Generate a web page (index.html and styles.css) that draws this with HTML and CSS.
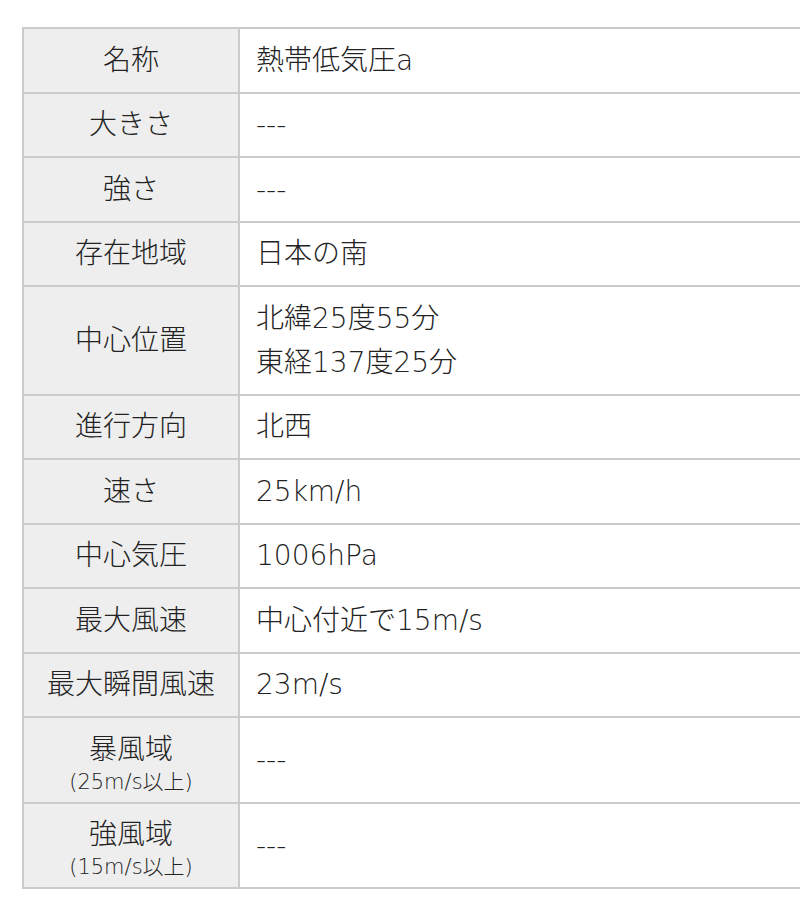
FILE: index.html
```html
<!DOCTYPE html>
<html lang="ja">
<head>
<meta charset="utf-8">
<link rel="stylesheet" href="styles.css">
</head>
<body>
<table class="info">
  <colgroup><col class="label-col"><col class="value-col"></colgroup>
  <tr><th>名称</th><td>熱帯低気圧a</td></tr>
  <tr><th>大きさ</th><td>---</td></tr>
  <tr><th>強さ</th><td>---</td></tr>
  <tr><th>存在地域</th><td>日本の南</td></tr>
  <tr><th>中心位置</th><td>北緯25度55分<br>東経137度25分</td></tr>
  <tr><th>進行方向</th><td>北西</td></tr>
  <tr><th>速さ</th><td>25km/h</td></tr>
  <tr><th>中心気圧</th><td>1006hPa</td></tr>
  <tr><th>最大風速</th><td>中心付近で15m/s</td></tr>
  <tr><th>最大瞬間風速</th><td>23m/s</td></tr>
  <tr><th>暴風域<span class="sub">(25m/s以上)</span></th><td>---</td></tr>
  <tr><th>強風域<span class="sub">(15m/s以上)</span></th><td>---</td></tr>
</table>
</body>
</html>
```
FILE: styles.css
```css
html, body {
  margin: 0;
  padding: 0;
  background: #fff;
  overflow: hidden;
}
body {
  padding: 27px 0 0 22px;
  font-family: "DejaVu Sans", "Noto Sans CJK JP", sans-serif;
  font-weight: 200;
  color: #222;
}
.info {
  border-collapse: collapse;
  table-layout: fixed;
  width: 820px;
  font-size: 28px;
  line-height: 44px;
}
.label-col {
  width: 216px;
}
.info th,
.info td {
  border: 2px solid #cbcbcb;
  padding: 9.5px 16px 9px;
  vertical-align: middle;
}
.info th {
  background: #eeeeee;
  font-weight: 200;
  text-align: center;
  padding: 9.5px 0 9px;
  white-space: nowrap;
}
.info td {
  text-align: left;
  background: #fff;
}
.sub {
  display: block;
  font-size: 21px;
  line-height: 21px;
}
```
